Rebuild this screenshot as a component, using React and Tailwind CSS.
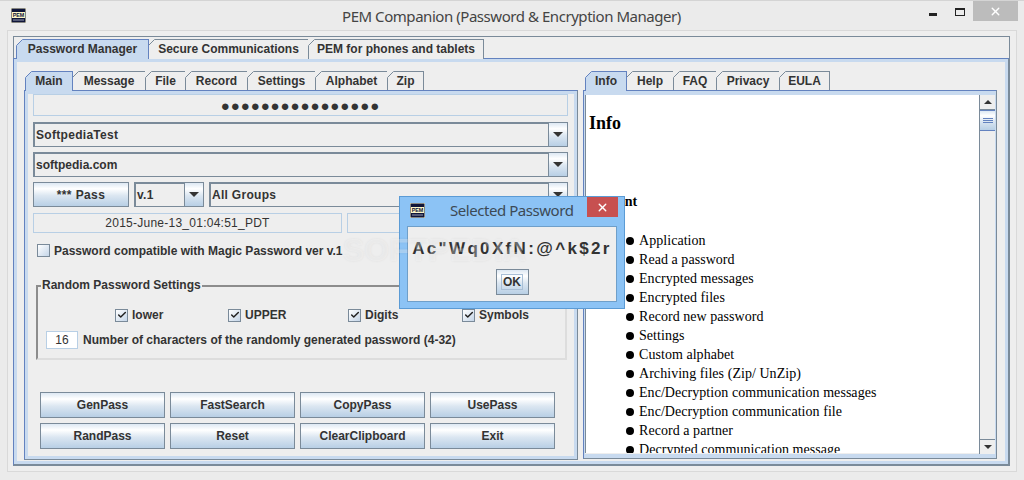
import { Check, X } from 'lucide-react'

const ui = "font-['Liberation_Sans',Arial,sans-serif] text-[12px] text-[#333333]"
const sansTitle = "font-['Noto_Sans',sans-serif] text-[15px] tracking-[-0.45px] text-[#3c4a55]"
const gradient = 'bg-[linear-gradient(to_bottom,#dde8f3_0%,#ffffff_25%,#dbe6f1_55%,#b8cfe5_100%)]'

const mainTabs = [
  ['Password Manager', 'w-[133px]', true],
  ['Secure Communications', 'w-[160px]', false],
  ['PEM for phones and tablets', 'w-[175px]', false],
]
const leftTabs = [
  ['Main', 'w-[48px]', true],
  ['Message', 'w-[73px]', false],
  ['File', 'w-[40px]', false],
  ['Record', 'w-[62px]', false],
  ['Settings', 'w-[68px]', false],
  ['Alphabet', 'w-[72px]', false],
  ['Zip', 'w-[36px]', false],
]
const rightTabs = [
  ['Info', 'w-[42px]', true],
  ['Help', 'w-[47px]', false],
  ['FAQ', 'w-[43px]', false],
  ['Privacy', 'w-[63px]', false],
  ['EULA', 'w-[50px]', false],
]
const checks = [
  ['lower', 'w-[113px]'],
  ['UPPER', 'w-[120px]'],
  ['Digits', 'w-[114px]'],
  ['Symbols', 'w-[80px]'],
]
const actions = [
  ['GenPass', 'FastSearch', 'CopyPass', 'UsePass'],
  ['RandPass', 'Reset', 'ClearClipboard', 'Exit'],
]
const topics = [
  'Application',
  'Read a password',
  'Encrypted messages',
  'Encrypted files',
  'Record new password',
  'Settings',
  'Custom alphabet',
  'Archiving files (Zip/ UnZip)',
  'Enc/Decryption communication messages',
  'Enc/Decryption communication file',
  'Record a partner',
  'Decrypted communication message',
]

// ── App logo ──────────────────────────────────────────────────
function PemLogo() {
  return (
    <svg width="15" height="15" viewBox="0 0 15 15" className="shrink-0">
      <rect width="15" height="15" fill="#fdf6c8" />
      <rect x="0.5" y="0.5" width="14" height="14" fill="#10163a" />
      <rect x="1" y="4" width="13" height="6" fill="#fdf6c8" />
      <text x="7.5" y="9.2" textAnchor="middle" fontSize="5.4" fontWeight="700" fontFamily="Liberation Sans" fill="#10163a">PEM</text>
      <rect x="2" y="11.5" width="11" height="1" fill="#9aa0b5" />
    </svg>
  )
}

// ── Metal style tab with its clipped corner ───────────────────
function Tab({ label, width, active, height = 'h-[20px] pb-[2px]' }) {
  return (
    <div
      className={`relative flex items-center justify-center border-r border-t font-bold ${height} ${width} ${
        active ? 'z-10 border-l border-[#6382bf] bg-[#c8daef]' : 'border-[#7a8a99] bg-[#eeeeee]'
      }`}
    >
      <svg width="7" height="7" viewBox="0 0 7 7" className="absolute -left-px -top-px">
        <polygon points="0,0 7,0 0,7" fill="#eeeeee" />
        <line x1="0.5" y1="6.5" x2="6.5" y2="0.5" stroke={active ? '#6382bf' : '#7a8a99'} />
      </svg>
      {active && <span className="absolute inset-x-0 -bottom-[2px] h-[2px] bg-[#c8daef]" />}
      {label}
    </div>
  )
}

function TriangleDown() {
  return <div className="h-0 w-0 border-x-[5px] border-t-[5px] border-x-transparent border-t-[#333333]" />
}

function Combo({ value, className, tracking = 'tracking-[0.3px]' }) {
  return (
    <div className={`flex h-[25px] border border-[#7a8a99] bg-[#eeeeee] shadow-[inset_1px_1px_0_#7a8a99] ${className}`}>
      <div className={`flex flex-1 items-center pl-[2px] font-bold ${tracking}`}>{value}</div>
      <div className={`flex w-[19px] items-center justify-center border-l border-[#7a8a99] ${gradient}`}>
        <TriangleDown />
      </div>
    </div>
  )
}

function Button({ children, className }) {
  return (
    <div className={`flex items-center justify-center border border-[#7a8a99] font-bold ${gradient} ${className}`}>
      {children}
    </div>
  )
}

function CheckBox({ checked }) {
  return (
    <div className="flex h-[13px] w-[13px] shrink-0 items-center justify-center border border-[#7a8a99] bg-[linear-gradient(135deg,#ffffff,#c4d5e8)]">
      {checked && <Check size={10} strokeWidth={3.5} color="#222222" />}
    </div>
  )
}

// ── Left pane ─────────────────────────────────────────────────
function LeftPane() {
  return (
    <div className="w-[554px]">
      <div className="ml-[1px] flex h-[19px]">
        {leftTabs.map(([label, w, active]) => (
          <Tab key={label} label={label} width={w} active={active} height="h-[19px]" />
        ))}
      </div>
      <div className="h-[370px] border border-[#6382bf] border-r-[#7a8a99] border-b-[#7a8a99]">
        <div className="h-full border-[3px] border-[#c8daef] pl-[5px] pr-[6px]">
          <div className="flex h-[22px] items-center justify-center border border-[#b8cfe5] text-[15px] leading-none tracking-[0.9px] text-[#333333]">
            ●●●●●●●●●●●●●●●●
          </div>
          <Combo value="SoftpediaTest" className="mt-[6px]" />
          <Combo value="softpedia.com" className="mt-[5px]" tracking="tracking-normal" />

          <div className="mt-[5px] flex h-[25px]">
            <Button className="w-[96px] text-[12px] tracking-[0.4px]">*** Pass</Button>
            <Combo value="v.1" className="ml-[5px] w-[70px]" />
            <Combo value="All Groups" className="ml-[5px] flex-1" />
          </div>

          <div className="mt-[6px] flex h-[20px]">
            <div className="flex w-[309px] items-center justify-center border border-[#b8cfe5] tracking-[0.25px]">
              2015-June-13_01:04:51_PDT
            </div>
            <div className="ml-[5px] flex-1 border border-[#b8cfe5]" />
          </div>

          <div className="mt-[11px] flex h-[13px] items-center pl-[4px]">
            <CheckBox />
            <span className="ml-[4px] font-bold">Password compatible with Magic Password ver v.1</span>
          </div>

          <div className="relative ml-[3px] mt-[28px] h-[75px] w-[531px] border-2 border-[#8c8c8c] border-b-[#dddddd] border-r-[#dddddd] pt-[19px]">
            <span className="absolute -top-[9px] left-[3px] bg-[#eeeeee] px-[1px] font-bold leading-[14px]">
              Random Password Settings
            </span>
            <div className="flex pl-[77px]">
              {checks.map(([label, w]) => (
                <div key={label} className={`flex items-center gap-[4px] font-bold ${w}`}>
                  <CheckBox checked />
                  {label}
                </div>
              ))}
            </div>
            <div className="ml-[8px] mt-[6px] flex items-center">
              <div className="flex h-[18px] w-[32px] items-center justify-center border border-[#b8cfe5] bg-white">16</div>
              <span className="ml-[5px] pt-[1px] font-bold">
                Number of characters of the randomly generated password (4-32)
              </span>
            </div>
          </div>

          <div className="ml-[7px] mt-[32px] flex flex-col gap-[5px]">
            {actions.map((row) => (
              <div key={row[0]} className="flex gap-[5px]">
                {row.map((label) => (
                  <Button key={label} className="h-[26px] w-[125px]">{label}</Button>
                ))}
              </div>
            ))}
          </div>
        </div>
      </div>
    </div>
  )
}

// ── Right pane ────────────────────────────────────────────────
function Scrollbar() {
  return (
    <div className="flex w-[16px] flex-col border-l border-[#7a8a99] bg-[#eeeeee]">
      <div className="flex h-[15px] items-center justify-center border-b border-[#7a8a99]">
        <div className="h-0 w-0 border-x-[4px] border-b-[4px] border-x-transparent border-b-[#333333]" />
      </div>
      <div className={`flex h-[21px] flex-col items-center justify-center gap-[1px] border-y border-[#6382bf] ${gradient}`}>
        <div className="h-px w-[10px] bg-[#6382bf]" />
        <div className="h-px w-[10px] bg-[#6382bf]" />
        <div className="h-px w-[10px] bg-[#6382bf]" />
      </div>
      <div className="flex-1" />
      <div className="flex h-[15px] items-center justify-center border-t border-[#7a8a99]">
        <div className="h-0 w-0 border-x-[4px] border-t-[4px] border-x-transparent border-t-[#333333]" />
      </div>
    </div>
  )
}

function RightPane() {
  return (
    <div className="ml-[5px] w-[414px]">
      <div className="ml-[2px] flex h-[19px]">
        {rightTabs.map(([label, w, active]) => (
          <Tab key={label} label={label} width={w} active={active} height="h-[19px]" />
        ))}
      </div>
      <div className="h-[369px] border border-[#6382bf] border-r-[#7a8a99] border-b-[#7a8a99]">
        <div className="flex h-full border-x-[1px] border-t-[4px] border-b-[4px] border-[#c8daef]">
          <div className="h-[358px] flex-1 overflow-hidden border-l border-[#7a8a99] bg-white pl-[3px] font-['Liberation_Serif','Times_New_Roman',serif] text-black">
            <div className="mt-[18px] text-[18px] font-bold leading-[21px]">Info</div>
            <div className="mt-[59px] text-[14px] font-bold leading-[17px]">Content</div>
            <ul className="mt-[21px] pl-[37px] text-[14px] leading-[19px] tracking-[0.05px]">
              {topics.map((t) => (
                <li key={t} className="flex items-center">
                  <span className="h-[8px] w-[8px] rounded-full bg-black" />
                  <span className="ml-[5px] whitespace-nowrap">{t}</span>
                </li>
              ))}
            </ul>
          </div>
          <Scrollbar />
        </div>
      </div>
    </div>
  )
}

// ── Dialog over the window ────────────────────────────────────
function PasswordDialog() {
  return (
    <div className="absolute left-[399px] top-[195px] z-20 h-[113px] w-[226px] border border-[#5b9bd5] bg-[#8cc3f5] px-[7px]">
      <div className="flex h-[29px]">
        <div className="ml-[3px] mt-[6px]"><PemLogo /></div>
        <div className={`flex-1 pl-[25px] pt-[2px] ${sansTitle}`}>Selected Password</div>
        <div className="-mr-[1px] flex h-[20px] w-[31px] items-center justify-center bg-[#c75050]">
          <X size={13} strokeWidth={2.5} color="#ffffff" />
        </div>
      </div>
      <div className="h-[76px] border border-[#6f9fc9] bg-[#eeeeee] text-center">
        <div className="mt-[12px] whitespace-nowrap font-['Liberation_Sans',Arial,sans-serif] text-[17px] font-bold leading-[20px] tracking-[2.35px] text-[#333333]">
          Ac"Wq0XfN:@^k$2r
        </div>
        <div className="mt-[10px] flex justify-center">
          <div className={`flex h-[26px] w-[33px] items-center justify-center border border-[#7a8a99] ${gradient}`}>
            <span className="border border-[#a9bfd6] px-[1px] text-[12px] font-bold leading-[14px] text-[#333333]">OK</span>
          </div>
        </div>
      </div>
    </div>
  )
}

export default function App() {
  return (
    <div className={`relative flex h-[480px] w-[1024px] flex-col overflow-hidden border-t border-[#d4d4d4] bg-[#ebebeb] ${ui}`}>
      {/* Title bar */}
      <div className="relative flex h-[29px] shrink-0 items-start pl-[11px] pt-[7px]">
        <PemLogo />
        <div className={`ml-[316px] -mt-[3px] ${sansTitle} text-[#444444]`}>PEM Companion (Password &amp; Encryption Manager)</div>
        <div className="ml-auto mr-[6px] flex -mt-[7px]">
          <div className="mr-[18px] mt-[12px] h-[3px] w-[8px] bg-[#222222]" />
          <div className="mr-[8px] mt-[7px] h-[8px] w-[10px] border border-t-2 border-[#222222]" />
          <div className="flex h-[20px] w-[45px] items-center justify-center bg-[#bcbcbc]">
            <X size={13} strokeWidth={2.5} color="#ffffff" />
          </div>
        </div>
      </div>

      {/* Client area */}
      <div className="mx-[7px] h-[442px] border border-[#d9d9d9] bg-[#eeeeee] px-[5px] pt-[5px]">
        <div className="h-[22px] w-[997px] border-x border-t border-[#7a8a99] pl-[2px] pt-[2px]">
          <div className="flex h-[20px]">
            {mainTabs.map(([label, w, active]) => (
              <Tab key={label} label={label} width={w} active={active} />
            ))}
          </div>
        </div>
        <div className="h-[408px] w-[997px] border border-[#6382bf] border-b-2 border-r-2 border-b-[#7a8a99] border-r-[#7a8a99]">
          <div className="h-full border-[3px] border-[#c8daef] pl-[7px] pt-[9px]">
            <div className="flex">
              <LeftPane />
              <RightPane />
            </div>
          </div>
        </div>
      </div>

      {/* Softpedia watermark */}
      <div className="pointer-events-none absolute left-[343px] top-[231px] z-30 text-[32px] font-bold leading-[36px] text-white/30 [text-shadow:0_0_3px_rgba(0,0,0,0.06)]">
        SOFTPEDIA
      </div>

      <PasswordDialog />
    </div>
  )
}
